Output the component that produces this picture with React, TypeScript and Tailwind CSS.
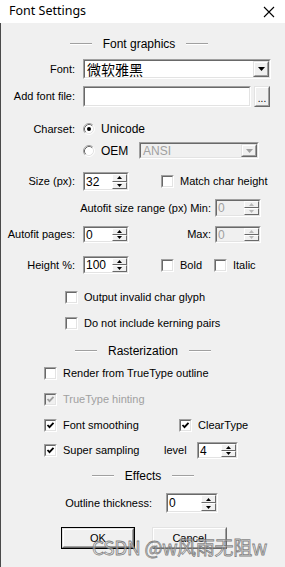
import React from "react";

const FONT = "font-['Liberation_Sans',Arial,sans-serif] text-[11px]";

function Raised({ className = "", children }: { className?: string; children?: React.ReactNode }) {
  return (
    <div className={`flex border border-t-[#e3e3e3] border-l-[#e3e3e3] border-b-[#696969] border-r-[#696969] ${className}`}>
      <div className="flex-1 flex items-center justify-center border border-t-white border-l-white border-b-[#a0a0a0] border-r-[#a0a0a0] bg-[#f0f0f0]">
        {children}
      </div>
    </div>
  );
}

function SpinBtn({ up, disabled }: { up?: boolean; disabled?: boolean }) {
  return (
    <div className="flex-1 flex items-center justify-center border border-t-white border-l-white border-b-[#696969] border-r-[#696969] bg-[#f0f0f0]">
      <svg width="5" height="3" viewBox="0 0 5 3">
        <polygon
          points={up ? "0,3 2.5,0 5,3" : "0,0 5,0 2.5,3"}
          fill={disabled ? "#b8b8b8" : "#000"}
        />
      </svg>
    </div>
  );
}

function Field({ className = "", disabled, children }: { className?: string; disabled?: boolean; children?: React.ReactNode }) {
  return (
    <div className={`flex border border-t-[#a0a0a0] border-l-[#a0a0a0] border-b-white border-r-white ${className}`}>
      <div
        className={`flex-1 flex min-w-0 border border-t-[#696969] border-l-[#696969] border-b-[#e3e3e3] border-r-[#e3e3e3] ${
          disabled ? "bg-[#f0f0f0] text-[#a0a0a0]" : "bg-white text-black"
        }`}
      >
        {children}
      </div>
    </div>
  );
}

function Spinner({ className = "", value, disabled }: { className?: string; value: string; disabled?: boolean }) {
  return (
    <Field className={className} disabled={disabled}>
      <div className="flex-1 flex items-center pl-[1px] leading-none text-[12px]">{value}</div>
      <div className="w-[15px] flex flex-col">
        <SpinBtn up disabled={disabled} />
        <SpinBtn disabled={disabled} />
      </div>
    </Field>
  );
}

function DropBtn({ disabled, className = "" }: { disabled?: boolean; className?: string }) {
  return (
    <Raised className={className}>
      <svg width="7" height="4" viewBox="0 0 7 4">
        <polygon points="0,0 7,0 3.5,4" fill={disabled ? "#a0a0a0" : "#000"} />
      </svg>
    </Raised>
  );
}

function Check({ checked, disabled }: { checked?: boolean; disabled?: boolean }) {
  return (
    <div className="w-[13px] h-[13px] shrink-0 flex border border-t-[#a0a0a0] border-l-[#a0a0a0] border-b-white border-r-white">
      <div
        className={`flex-1 flex items-center justify-center border border-t-[#696969] border-l-[#696969] border-b-[#e3e3e3] border-r-[#e3e3e3] ${
          disabled ? "bg-[#f0f0f0]" : "bg-white"
        }`}
      >
        {checked && (
          <svg width="9" height="9" viewBox="0 0 9 9">
            <path d="M1.5 4 L3.5 6.2 L7.5 1.8" fill="none" stroke={disabled ? "#a0a0a0" : "#000"} strokeWidth="1.8" />
          </svg>
        )}
      </div>
    </div>
  );
}

function Radio({ checked }: { checked?: boolean }) {
  return (
    <svg width="12" height="12" viewBox="0 0 12 12" className="shrink-0">
      <circle cx="6" cy="6" r="5" fill="#fff" />
      <path d="M2.11 9.89 A5.5 5.5 0 0 1 9.89 2.11" fill="none" stroke="#a0a0a0" strokeWidth="1" />
      <path d="M9.89 2.11 A5.5 5.5 0 0 1 2.11 9.89" fill="none" stroke="#ffffff" strokeWidth="1" />
      <path d="M2.82 9.18 A4.5 4.5 0 0 1 9.18 2.82" fill="none" stroke="#696969" strokeWidth="1" />
      <path d="M9.18 2.82 A4.5 4.5 0 0 1 2.82 9.18" fill="none" stroke="#e3e3e3" strokeWidth="1" />
      {checked && <circle cx="6" cy="6" r="2" fill="#000" />}
    </svg>
  );
}

function Header({ title, className = "" }: { title: string; className?: string }) {
  return (
    <div className={`flex items-center justify-center h-[14px] gap-[11px] ${className}`}>
      <div className="w-[22px] h-[2px] border-t border-t-[#a0a0a0] border-b border-b-white" />
      <span className="leading-none whitespace-nowrap text-[12px]">{title}</span>
      <div className="w-[22px] h-[2px] border-t border-t-[#a0a0a0] border-b border-b-white" />
    </div>
  );
}

function Label({ children, className = "w-[74px]" }: { children: React.ReactNode; className?: string }) {
  return <div className={`shrink-0 text-right leading-none whitespace-nowrap ${className}`}>{children}</div>;
}

function CheckLabel({ checked, disabled, text, className = "" }: { checked?: boolean; disabled?: boolean; text: string; className?: string }) {
  return (
    <div className={`flex items-center ${className}`}>
      <Check checked={checked} disabled={disabled} />
      <span className={`ml-[6px] leading-none whitespace-nowrap ${disabled ? "text-[#a0a0a0]" : ""}`}>{text}</span>
    </div>
  );
}

export default function App() {
  return (
    <div className={`w-[285px] h-[567px] overflow-hidden bg-[#f0f0f0] text-black ${FONT} flex flex-col relative`}>
      {/* Title bar */}
      <div className="h-[23px] bg-white flex items-center justify-between pl-[9px] pr-[10px]">
        <span className="font-['Noto_Sans','Liberation_Sans',sans-serif] text-[12.5px] leading-none">Font Settings</span>
        <svg width="12" height="12" viewBox="0 0 12 12">
          <path d="M1 1 L11 11 M11 1 L1 11" stroke="#000" strokeWidth="1.1" />
        </svg>
      </div>

      <div className="flex-1 flex flex-col border-l border-l-[#4a4a4a]">
        <Header title="Font graphics" className="mt-[14px] pr-[8px]" />

        {/* Font */}
        <div className="flex items-center mt-[8px]">
          <Label>Font:</Label>
          <Field className="ml-[8px] w-[188px] h-[20px]">
            <div className="flex-1 flex items-center pl-[2px] leading-none font-['Noto_Sans_CJK_SC',sans-serif] text-[14px]">微软雅黑</div>
            <DropBtn className="w-[16px]" />
          </Field>
        </div>

        {/* Add font file */}
        <div className="flex items-center mt-[7px]">
          <Label>Add font file:</Label>
          <Field className="ml-[8px] w-[168px] h-[21px]" />
          <Raised className="ml-[3px] w-[16px] h-[21px]">
            <span className="text-[10px] leading-none mt-[5px]">...</span>
          </Raised>
        </div>

        {/* Charset */}
        <div className="flex items-center mt-[14px] h-[16px]">
          <Label>Charset:</Label>
          <div className="ml-[8px] flex items-center">
            <Radio checked />
            <span className="ml-[6px] leading-none text-[12px]">Unicode</span>
          </div>
        </div>
        <div className="flex items-center mt-[5px] h-[17px] pl-[82px]">
          <div className="w-[56px] flex items-center">
            <Radio />
            <span className="ml-[6px] leading-none text-[12px]">OEM</span>
          </div>
          <Field disabled className="w-[120px] h-[17px]">
            <div className="flex-1 flex items-center pl-[2px] leading-none text-[12px]">ANSI</div>
            <DropBtn disabled className="w-[16px]" />
          </Field>
        </div>

        {/* Size */}
        <div className="flex items-center mt-[13px]">
          <Label>Size (px):</Label>
          <Spinner className="ml-[8px] w-[46px] h-[19px]" value="32" />
          <CheckLabel className="ml-[32px]" text="Match char height" />
        </div>

        {/* Autofit min */}
        <div className="flex items-center mt-[8px]">
          <Label className="w-[210px]">Autofit size range (px) Min:</Label>
          <Spinner disabled className="ml-[4px] w-[46px] h-[18px]" value="0" />
        </div>

        {/* Autofit pages */}
        <div className="flex items-center mt-[9px]">
          <Label>Autofit pages:</Label>
          <Spinner className="ml-[8px] w-[46px] h-[17px]" value="0" />
          <Label className="w-[82px]">Max:</Label>
          <Spinner disabled className="ml-[4px] w-[46px] h-[17px]" value="0" />
        </div>

        {/* Height */}
        <div className="flex items-center mt-[13px]">
          <Label>Height %:</Label>
          <Spinner className="ml-[8px] w-[46px] h-[18px]" value="100" />
          <CheckLabel className="ml-[32px] w-[53px]" text="Bold" />
          <CheckLabel text="Italic" />
        </div>

        <CheckLabel className="mt-[17px] pl-[64px] h-[13px]" text="Output invalid char glyph" />
        <CheckLabel className="mt-[13px] pl-[64px] h-[13px]" text="Do not include kerning pairs" />

        <Header title="Rasterization" className="mt-[14px]" />

        <CheckLabel className="mt-[9px] pl-[43px] h-[13px]" text="Render from TrueType outline" />
        <CheckLabel className="mt-[13px] pl-[43px] h-[13px]" checked disabled text="TrueType hinting" />
        <div className="flex items-center mt-[13px] pl-[43px] h-[13px]">
          <CheckLabel className="w-[135px]" checked text="Font smoothing" />
          <CheckLabel checked text="ClearType" />
        </div>
        <div className="flex items-center mt-[10px] pl-[43px] h-[17px]">
          <CheckLabel className="w-[120px]" checked text="Super sampling" />
          <span className="w-[33px] leading-none">level</span>
          <Spinner className="w-[41px] h-[17px]" value="4" />
        </div>

        <Header title="Effects" className="mt-[10px]" />

        <div className="flex items-center mt-[10px]">
          <Label className="w-[151px]">Outline thickness:</Label>
          <Spinner className="ml-[14px] w-[52px] h-[20px]" value="0" />
        </div>

        <div className="flex items-center mt-[14px] pl-[60px]">
          <div className="w-[74px] h-[22px] flex border border-black">
            <Raised className="flex-1">
              <span className="leading-none">OK</span>
            </Raised>
          </div>
          <Raised className="ml-[17px] w-[75px] h-[22px]">
            <span className="leading-none">Cancel</span>
          </Raised>
        </div>
      </div>

      {/* Watermark */}
      <div className="absolute left-[92px] top-[537px] text-[19px] tracking-[-0.3px] leading-none whitespace-nowrap font-['Noto_Sans_CJK_SC',sans-serif] text-[rgba(235,235,235,0.55)] [-webkit-text-stroke:0.8px_rgba(100,100,100,0.8)]">
        CSDN @w风雨无阻w
      </div>
    </div>
  );
}
